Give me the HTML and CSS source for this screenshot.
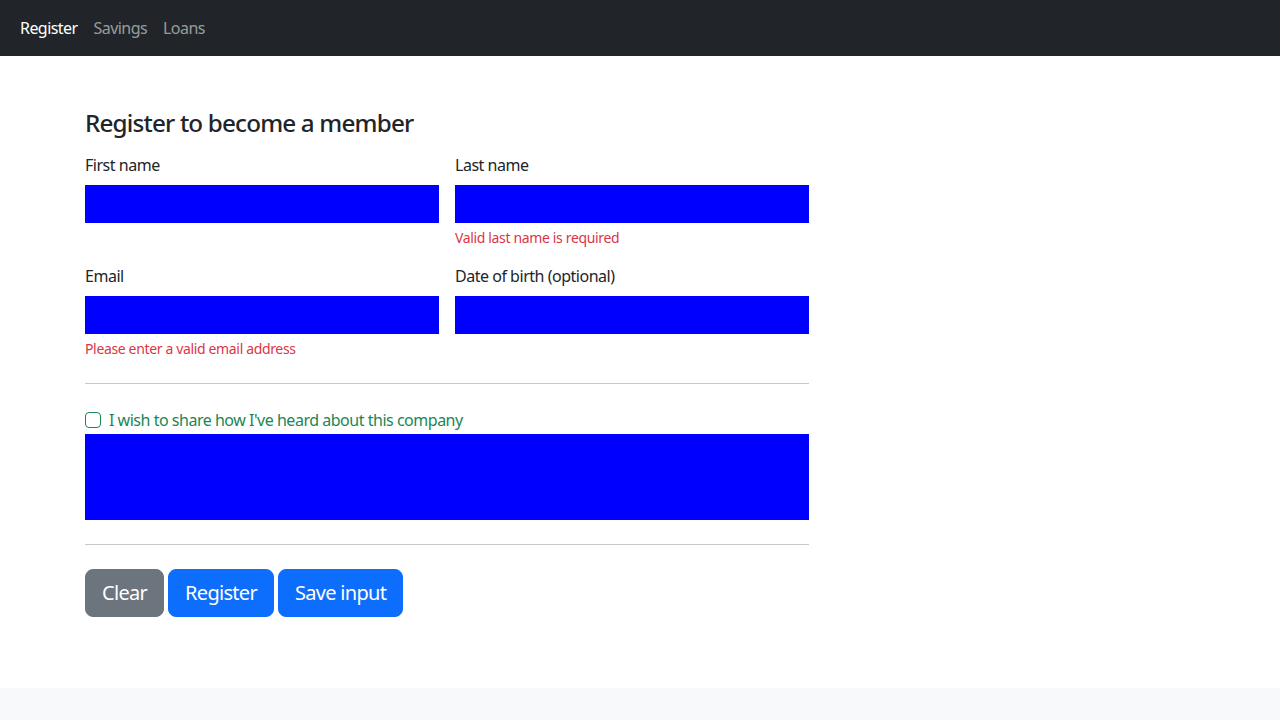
FILE: index.html
```html
<!DOCTYPE html>
<html lang="en">
<head>
<meta charset="utf-8">
<title>Register</title>
<link rel="stylesheet" href="styles.css">
</head>
<body>
<nav class="navbar">
  <a class="nav-link active" href="#">Register</a>
  <a class="nav-link" href="#">Savings</a>
  <a class="nav-link" href="#">Loans</a>
</nav>
<main class="main">
  <div class="container">
    <form class="form">
      <h4 class="title">Register to become a member</h4>
      <div class="grid">
        <div class="field">
          <label class="label">First name</label>
          <div class="input"></div>
        </div>
        <div class="field">
          <label class="label">Last name</label>
          <div class="input"></div>
          <div class="feedback">Valid last name is required</div>
        </div>
        <div class="field">
          <label class="label">Email</label>
          <div class="input"></div>
          <div class="feedback">Please enter a valid email address</div>
        </div>
        <div class="field">
          <label class="label">Date of birth (optional)</label>
          <div class="input"></div>
        </div>
      </div>
      <hr class="rule">
      <div class="check">
        <span class="check-box"></span>
        <span class="check-label">I wish to share how I've heard about this company</span>
      </div>
      <div class="textarea"></div>
      <hr class="rule">
      <div class="buttons">
        <button type="button" class="btn btn-secondary">Clear</button>
        <button type="button" class="btn btn-primary">Register</button>
        <button type="button" class="btn btn-primary">Save input</button>
      </div>
    </form>
  </div>
</main>
<footer class="footer"></footer>
</body>
</html>
```

FILE: styles.css
```css
* { box-sizing: border-box; }
html, body { margin: 0; padding: 0; }
body {
  font-family: "Noto Sans", "Open Sans", sans-serif;
  font-size: 16px;
  line-height: 1.5;
  letter-spacing: -0.03em;
  color: #212529;
  background: #fff;
}
.navbar {
  background: #212529;
  height: 56px;
  padding: 8px 12px;
  display: flex;
  align-items: center;
}
.nav-link {
  color: rgba(255,255,255,.55);
  text-decoration: none;
  padding: 8px;
  line-height: 24px;
  letter-spacing: -0.035em;
}
.nav-link.active { color: #fff; }
.main {
  height: 632px;
  padding-top: 52px;
}
.container { padding-left: 85px; }
.form { width: 724px; }
.title {
  margin: 0 0 16px;
  font-size: 24.24px;
  font-weight: 500;
  line-height: 1.2;
  letter-spacing: -0.034em;
}
.grid {
  display: grid;
  grid-template-columns: 1fr 1fr;
  column-gap: 16px;
  row-gap: 16px;
}
.label {
  display: block;
  margin-bottom: 8px;
  line-height: 24px;
}
.input {
  height: 38px;
  background: #0000ff;
}
.feedback {
  margin-top: 4px;
  font-size: 14px;
  line-height: 21px;
  color: #dc3545;
  letter-spacing: -0.025em;
}
.rule {
  margin: 24px 0;
  border: 0;
  border-top: 1px solid #c6c7c8;
}
.check {
  display: flex;
  align-items: flex-start;
  line-height: 24px;
  margin-bottom: 2px;
  color: #198754;
}
.check-box {
  width: 16px;
  height: 16px;
  margin-top: 4px;
  margin-right: 8px;
  border: 1px solid #198754;
  border-radius: 4px;
  background: #fff;
  flex: none;
}
.textarea {
  height: 86px;
  background: #0000ff;
}
.buttons {
  display: flex;
  gap: 4px;
}
.btn {
  font-family: inherit;
  font-size: 20px;
  letter-spacing: -0.035em;
  line-height: 30px;
  padding: 8px 16px;
  border: 1px solid transparent;
  border-radius: 8px;
  color: #fff;
  height: 48px;
}
.btn-secondary { background: #6c757d; border-color: #6c757d; }
.btn-primary { background: #0d6efd; border-color: #0d6efd; }
.footer {
  height: 32px;
  background: #f8f9fa;
}
```
